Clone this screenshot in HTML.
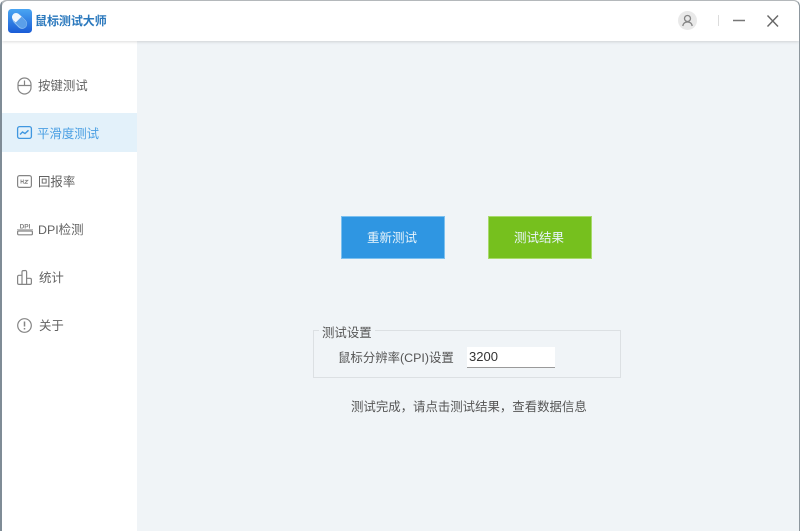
<!DOCTYPE html>
<html lang="zh"><head><meta charset="utf-8">
<style>
*{box-sizing:border-box;margin:0;padding:0}
html,body{width:800px;height:532px;overflow:hidden;background:#fff}
body{font-family:"Liberation Sans","Noto Sans CJK SC",sans-serif;position:relative}
#w{position:absolute;left:0;top:0;width:800px;height:532px;background:#fff;overflow:hidden}
#bd{position:absolute;left:0;top:0;width:800px;height:531px;background:linear-gradient(90deg,#7f8c96 0,#7f8c96 2px,#b4b8bb 2px,#b4b8bb 798px,#8d979e 798px);border-radius:6px 6px 0 0}
#a{position:absolute;left:2px;top:1px;width:797px;height:531px;background:#fff;border-radius:6px 6px 0 0;overflow:hidden}
#main{position:absolute;left:135px;top:40px;width:662px;height:490px;background:#f0f4f7}
#tb{position:absolute;left:0;top:0;width:797px;height:40px;background:#fff;box-shadow:0 1px 3px rgba(0,0,0,.14)}
.t{position:absolute;white-space:nowrap;font-size:12.42px;line-height:16px;color:#626262;filter:blur(.35px)}
.i{position:absolute;overflow:visible;filter:blur(.25px)}
#act{position:absolute;left:0;top:112px;width:135px;height:39px;background:#e3f1fa}
.btn{position:absolute;top:216px;width:104px;height:43px;color:#e8f4fb;text-align:center;font-size:12.5px;line-height:43px;padding-right:2px}
.btn span{filter:blur(.25px);display:block}
</style></head><body>
<div id="w"><div id="bd"></div><div id="a">
<div id="main"></div>
<div id="tb"></div>
<div id="act"></div>
</div>

<svg class="i" style="left:8px;top:9px" width="24" height="24" viewBox="0 0 24 24"><defs><linearGradient id="g" x1="0" y1="0" x2="0" y2="1"><stop offset="0" stop-color="#4aa6f2"/><stop offset="1" stop-color="#1a5cd6"/></linearGradient></defs><rect width="24" height="24" rx="3.500" fill="url(#g)"/><rect x="4" y="7.500" width="16.500" height="10" rx="5" transform="rotate(45 12 12)" fill="#8fc0f2"/><rect x="5" y="8" width="15" height="8.500" rx="4.200" transform="rotate(45 12 12)" fill="#5b9fe9"/><path d="M5.200 5.200c1.800-1.800 4.300-1.500 6 .2l2.300 2.300-5.800 5.800-2.300-2.300C3.700 9.500 3.400 7 5.200 5.200z" fill="#f2f7fd"/></svg>
<div class="t" style="left:35px;top:13px;font-size:12px;color:#2a78bd;letter-spacing:-.05px;font-weight:bold;filter:blur(.35px)">鼠标测试大师</div>

<div style="position:absolute;left:678px;top:11px;width:19px;height:19px;border-radius:50%;background:#e9e9e9"></div>
<svg class="i" style="left:678px;top:11px" width="19" height="19" viewBox="0 0 19 19" fill="none" stroke="#858585" stroke-width="1.300"><circle cx="9.500" cy="7.500" r="3"/><path d="M4.800 15c.4-2.600 2.200-4 4.700-4s4.300 1.400 4.700 4"/></svg>
<div style="position:absolute;left:718px;top:15px;width:1px;height:11px;background:#dcdcdc"></div>
<svg class="i" style="left:732px;top:14px" width="14" height="14" fill="none" stroke="#777" stroke-width="1.500"><path d="M1 6.500h12"/></svg>
<svg class="i" style="left:766px;top:14px" width="14" height="14" fill="none" stroke="#666" stroke-width="1.400"><path d="M1.500 1.500l10.500 11M12 1.500L1.500 12.500"/></svg>

<svg class="i" style="left:17px;top:77px" width="15" height="18" viewBox="0 0 15 18" fill="none" stroke="#858585" stroke-width="1.200"><rect x="1" y="1" width="13" height="16" rx="6.500"/><path d="M1 8.500h13M7.500 3.500v5"/></svg>
<div class="t" style="left:38px;top:78px">按键测试</div>

<svg class="i" style="left:17px;top:126px" width="15" height="14" viewBox="0 0 15 14" fill="none" stroke="#3f97e0" stroke-width="1.300"><rect x=".6" y=".6" width="13.800" height="11.800" rx="2"/><path d="M3 8.500l2.500-2.500 2.500 1.500 3.500-3.200" stroke-width="1.400"/></svg>
<div class="t" style="left:37px;top:126px;color:#4a9fe3">平滑度测试</div>

<svg class="i" style="left:17px;top:175px" width="15" height="13" viewBox="0 0 15 13" fill="none" stroke="#858585" stroke-width="1.200"><rect x=".6" y=".6" width="13.800" height="11.800" rx="2"/><path d="M4 4.500v4M6.300 4.500v4M4 6.500h2.300M7.800 5.300h3l-3 3h3" stroke-width=".9"/></svg>
<div class="t" style="left:38px;top:174px">回报率</div>

<svg class="i" style="left:17px;top:223px" width="16" height="13" viewBox="0 0 16 13" fill="none" stroke="#858585"><text x="8" y="5.500" text-anchor="middle" font-family="Liberation Sans" font-size="6.500" font-weight="bold" fill="#858585" stroke="none">DPI</text><path d="M0 6.800h16" stroke-width=".7"/><rect x=".6" y="8" width="14.800" height="3.800" rx="1" stroke-width="1.200"/></svg>
<div class="t" style="left:38px;top:222px">DPI检测</div>

<svg class="i" style="left:17px;top:270px" width="15" height="15" viewBox="0 0 15 15" fill="none" stroke="#858585" stroke-width="1.200"><path d="M5 14.400H2A1.400 1.400 0 0 1 .6 13V6.600A1.300 1.300 0 0 1 2 5.300h3M5 14.400V2A1.400 1.400 0 0 1 6.400.6h1.200A1.400 1.400 0 0 1 9.600 2v12.400zM9.600 8.300H13a1.400 1.400 0 0 1 1.400 1.400V13a1.400 1.400 0 0 1-1.400 1.400H9.600"/></svg>
<div class="t" style="left:39px;top:270px">统计</div>

<svg class="i" style="left:17px;top:318px" width="15" height="15" viewBox="0 0 15 15" fill="none" stroke="#858585" stroke-width="1.200"><circle cx="7.500" cy="7.500" r="6.800"/><path d="M7.500 3.500v5M7.500 10v1.500" stroke-width="1.500"/></svg>
<div class="t" style="left:39px;top:318px">关于</div>

<div class="btn" style="left:341px;background:#2f96e2;border:1px solid #7cc0ef"><span>重新测试</span></div>
<div class="btn" style="left:488px;background:#76c01e;border:1px solid #a8da6c"><span>测试结果</span></div>

<div style="position:absolute;left:313px;top:330px;width:308px;height:48px;border:1px solid #dce0e3"></div>
<div class="t" style="left:319px;top:325px;padding:0 3px;background:#f0f4f7;color:#555">测试设置</div>
<div class="t" style="left:338px;top:350px;color:#555">鼠标分辨率(CPI)设置</div>
<div style="position:absolute;left:467px;top:347px;width:88px;height:21px;background:#fff;border-bottom:1px solid #9a9a9a;font-size:13px;line-height:20px;padding-left:2px;color:#333;filter:blur(.2px)">3200</div>
<div class="t" style="left:351px;top:399px;color:#555">测试完成，请点击测试结果，查看数据信息</div>
</div>
</body></html>
